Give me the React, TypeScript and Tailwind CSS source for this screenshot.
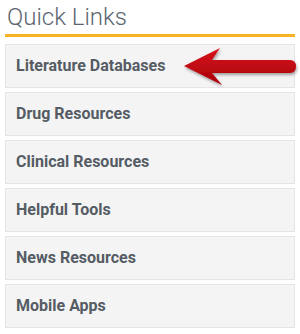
import React from 'react';

const links = [
    'Literature Databases',
    'Drug Resources',
    'Clinical Resources',
    'Helpful Tools',
    'News Resources',
    'Mobile Apps',
];

function Arrow() {
    return (
        <svg
            className="absolute left-[180px] top-[44px]"
            width="120"
            height="46"
            viewBox="0 0 120 46"
        >
            <defs>
                <linearGradient id="shaft" x1="0" y1="0" x2="0" y2="1">
                    <stop offset="0" stopColor="#d8141c" />
                    <stop offset="1" stopColor="#a8000a" />
                </linearGradient>
                <filter id="sh" x="-10%" y="-20%" width="130%" height="150%">
                    <feDropShadow dx="1" dy="2" stdDeviation="1.5" floodColor="#000" floodOpacity="0.35" />
                </filter>
            </defs>
            <path
                d="M4 22 L40 4 L32 16 L110 16 Q116 16 116 22.5 Q116 29 110 29 L32 29 L42 41 Z"
                fill="url(#shaft)"
                filter="url(#sh)"
            />
        </svg>
    );
}

export default function App() {
    return (
        <div className="relative w-[300px] h-[334px] bg-white px-[5px] font-['Roboto',sans-serif]">
            <h2 className="pl-[2px] pt-[4px] text-[24px] leading-[27px] font-light text-[#5d6670]">Quick Links</h2>
            <div className="mt-[3px] h-[3px] bg-[#f5b324]" />
            <ul className="mt-[7px] flex flex-col gap-[4px]">
                {links.map((l) => (
                    <li
                        key={l}
                        className="h-[44px] flex items-center pl-[10px] bg-[#f4f4f4] border border-[#e5e5e5] text-[16px] font-bold text-[#555c64]"
                    >
                        {l}
                    </li>
                ))}
            </ul>
            <Arrow />
        </div>
    );
}
